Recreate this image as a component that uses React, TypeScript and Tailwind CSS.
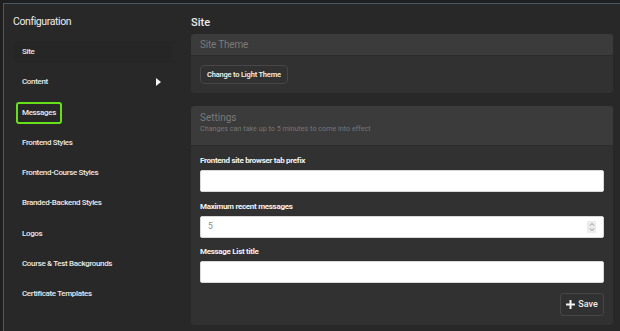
import React from "react";

const items = [
  "Site",
  "Content",
  "Messages",
  "Frontend Styles",
  "Frontend-Course Styles",
  "Branded-Backend Styles",
  "Logos",
  "Course & Test Backgrounds",
  "Certificate Templates",
];

function Field({ label, value, spinner }: { label: string; value?: string; spinner?: boolean }) {
  return (
    <div className="flex flex-col shrink-0">
      <div className="text-[8px] font-bold text-[#f2f2f2] leading-[10px] h-[10px] tracking-[-0.3px]">{label}</div>
      <div className="mt-[4px] h-[22px] bg-white rounded-[2px] border border-[#d8d8d8] flex items-center px-[7px]">
        <span className="text-[8.5px] text-[#8a8a8a]">{value}</span>
        {spinner && (
          <div className="ml-auto w-[9px] h-[12px] bg-[#ececec] rounded-[1px] flex flex-col items-center justify-center">
            <svg width="6" height="10" viewBox="0 0 6 10" fill="none" stroke="#888" strokeWidth="0.9">
              <path d="M1 3.5 L3 1.5 L5 3.5" />
              <path d="M1 6.5 L3 8.5 L5 6.5" />
            </svg>
          </div>
        )}
      </div>
    </div>
  );
}

export default function App() {
  return (
    <div className="w-[620px] h-[331px] bg-[#1f1f1f] pt-[3px] pl-[3px] overflow-hidden" style={{ fontFamily: "Roboto, 'Liberation Sans', sans-serif" }}>
      <div className="w-full h-full border-t border-l border-[#4a5963] bg-[#282828] flex">
        <div className="w-[177px] shrink-0 flex flex-col">
          <div className="pl-[9px] pt-[11px] h-[37px] shrink-0 text-[10.5px] text-[#ececec] leading-[14px] tracking-[-0.4px]">Configuration</div>
          <div className="flex flex-col gap-[8.25px]">
            {items.map((it, i) => (
              <div key={it} className={`h-[22px] ml-[9px] w-[159px] flex items-center relative shrink-0 ${i === 0 ? "bg-[#262626]" : ""}`}>
                {it === "Messages" ? (
                  <div className="ml-[3px] h-[22px] px-[4px] border-2 border-[#66e01a] rounded-[3px] flex items-center text-[8px] font-medium text-[#e8e8e8] tracking-[-0.35px]">
                    {it}
                  </div>
                ) : (
                  <span className="pl-[9px] text-[8px] font-medium text-[#e8e8e8] tracking-[-0.35px]">{it}</span>
                )}
                {it === "Content" && (
                  <svg className="absolute right-[11px] top-[7px]" width="5" height="8" viewBox="0 0 5 8">
                    <polygon points="0,0 5,4 0,8" fill="#f4f4f4" />
                  </svg>
                )}
              </div>
            ))}
          </div>
        </div>
        <div className="flex-1 pl-[10px] pr-[7px] flex flex-col">
          <div className="pt-[12px] h-[30px] shrink-0 text-[11px] font-medium text-[#ececec] leading-[14px]">Site</div>
          <div className="rounded-[3px] bg-[#313131] flex flex-col shrink-0">
            <div className="h-[22px] shrink-0 bg-[#3b3b3b] rounded-t-[3px] border-b border-[#2c2c2c] flex items-center pl-[9px] text-[10px] text-[#7a7a7a] tracking-[-0.2px]">
              Site Theme
            </div>
            <div className="h-[37px] shrink-0 flex items-center pl-[9px]">
              <div className="h-[19px] px-[6px] border border-[#474747] rounded-[4px] flex items-center text-[7.5px] font-semibold text-[#ededed] tracking-[-0.2px]">
                Change to Light Theme
              </div>
            </div>
          </div>
          <div className="mt-[13px] rounded-[3px] bg-[#313131] flex flex-col h-[219px] shrink-0">
            <div className="h-[40px] shrink-0 bg-[#3b3b3b] rounded-t-[3px] border-b border-[#2c2c2c] flex flex-col pl-[9px] pt-[5px]">
              <span className="text-[10px] text-[#7a7a7a] leading-[13px]">Settings</span>
              <span className="text-[7.2px] text-[#767676] leading-[10px]">Changes can take up to 5 minutes to come into effect</span>
            </div>
            <div className="px-[9px] pt-[10px] flex flex-col gap-[9.5px]">
              <Field label="Frontend site browser tab prefix" />
              <Field label="Maximum recent messages" value="5" spinner />
              <Field label="Message List title" />
            </div>
            <div className="flex justify-end pr-[9px] mt-[10px]">
              <div className="h-[23px] w-[44px] border border-[#464646] rounded-[3px] flex items-center justify-center gap-[3px] text-[9px] font-medium text-[#ededed]">
                <svg width="9" height="9" viewBox="0 0 9 9">
                  <rect x="3.5" y="0" width="2" height="9" fill="#f4f4f4" />
                  <rect x="0" y="3.5" width="9" height="2" fill="#f4f4f4" />
                </svg>
                Save
              </div>
            </div>
          </div>
        </div>
      </div>
    </div>
  );
}
